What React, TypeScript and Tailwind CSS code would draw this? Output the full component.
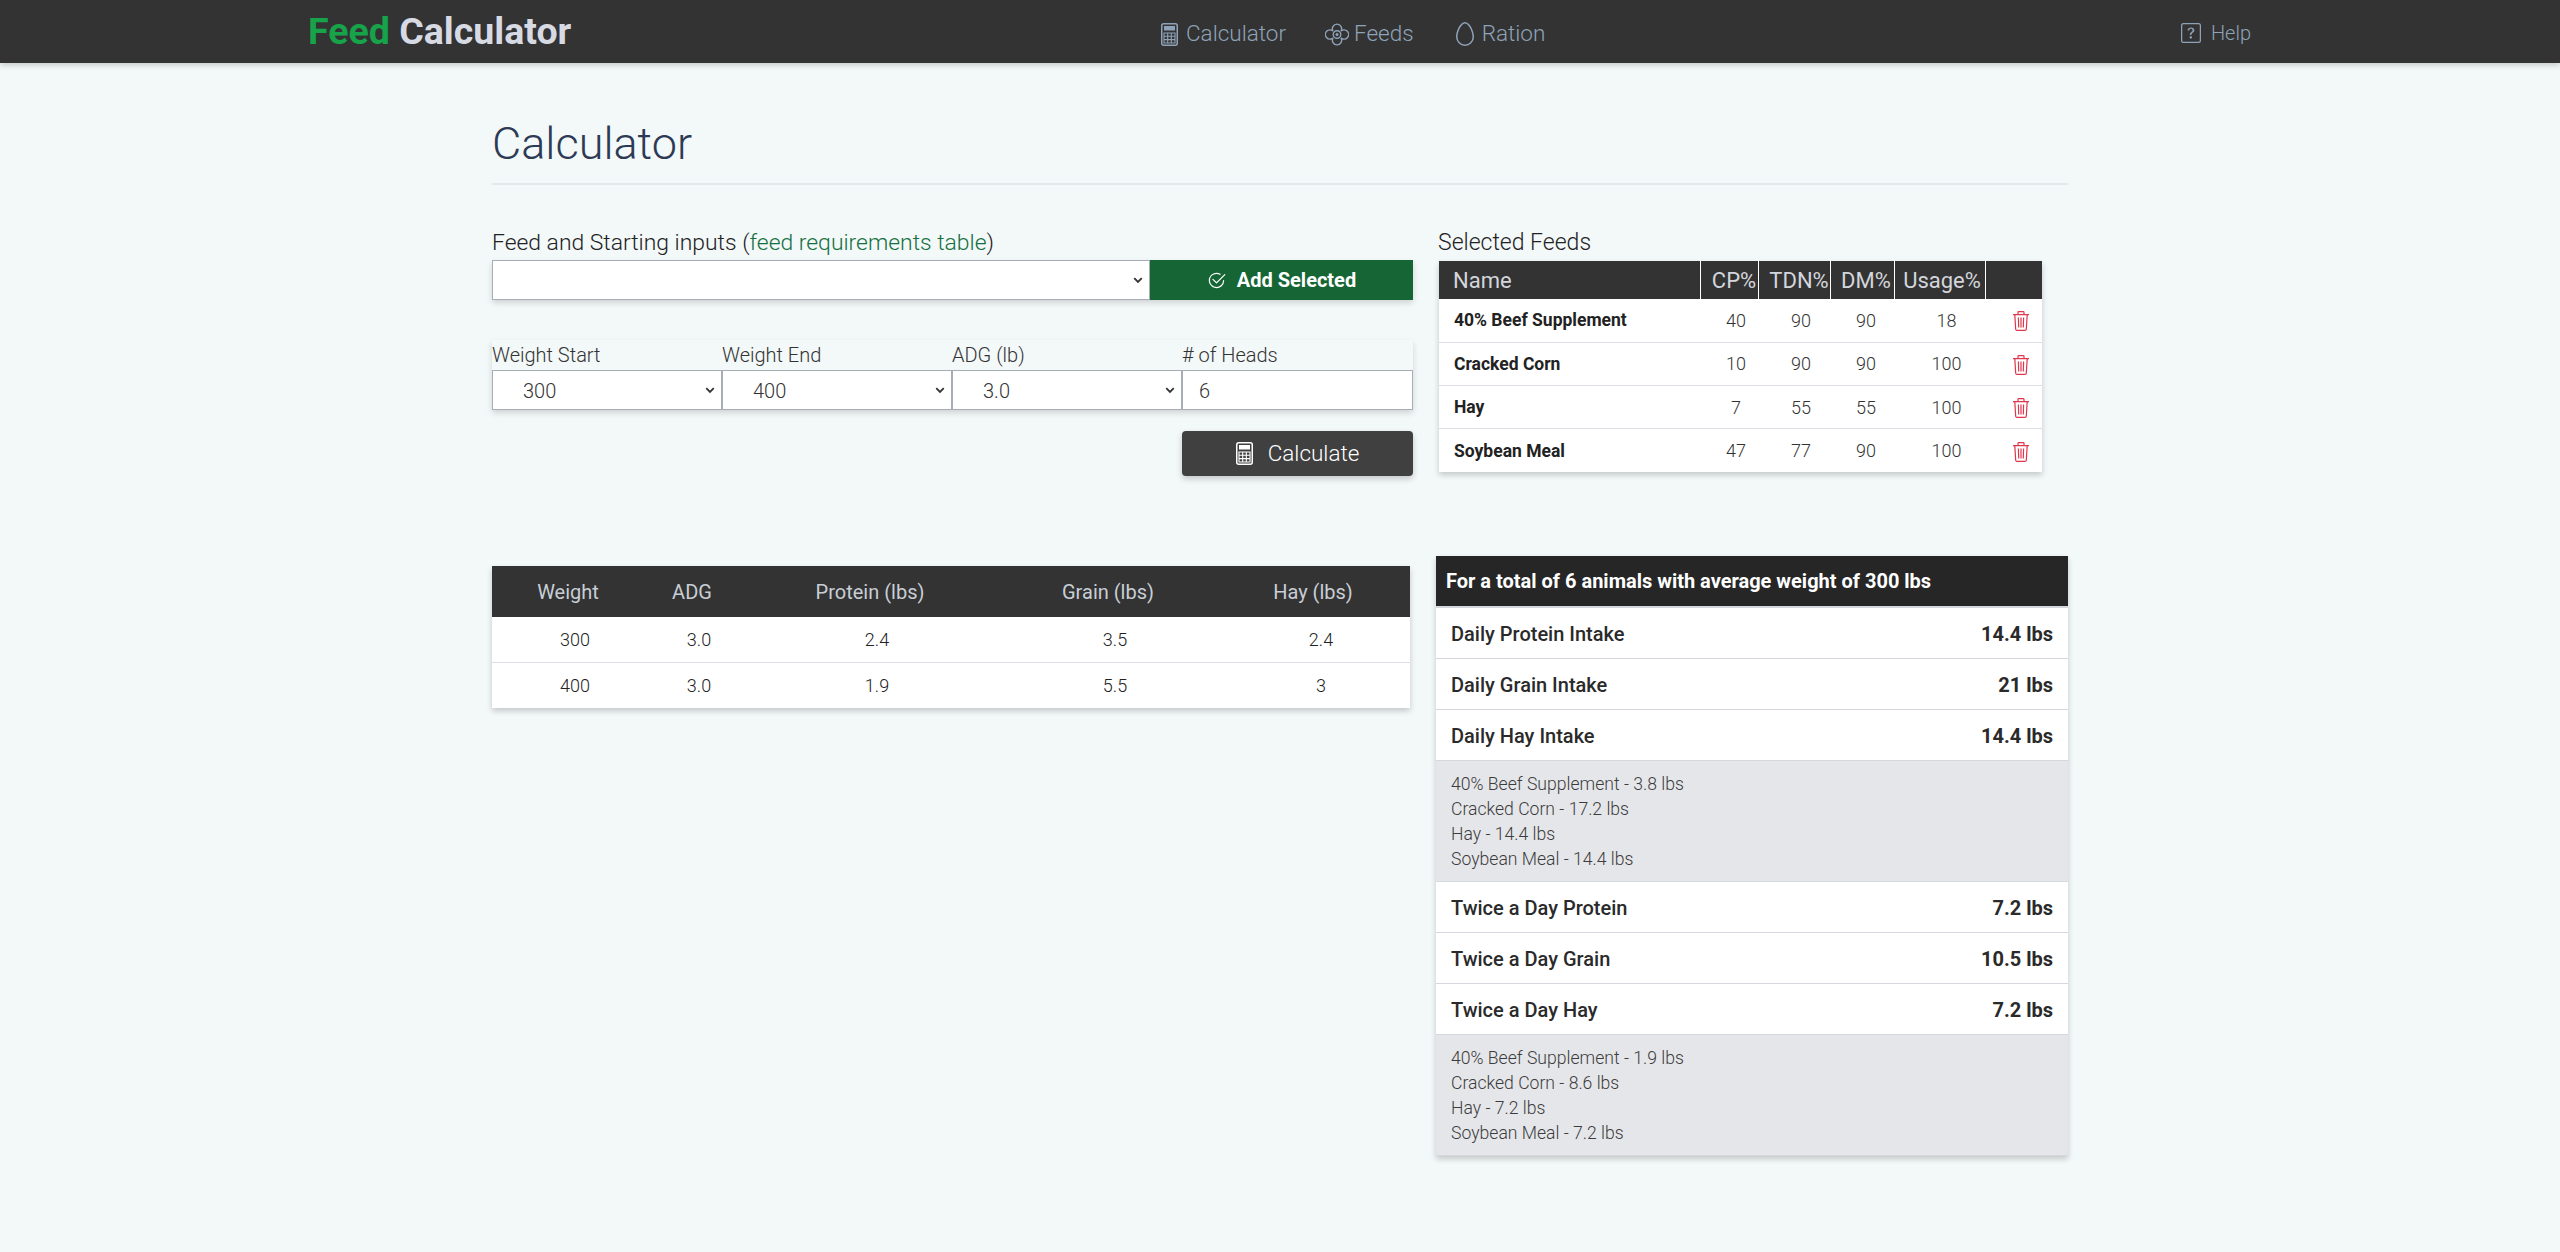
import { BsEgg, BsQuestionSquare, BsCheck2Circle } from "react-icons/bs";

const font = { fontFamily: "Roboto, sans-serif" };

const feeds = [
  { name: "40% Beef Supplement", cp: 40, tdn: 90, dm: 90, usage: 18 },
  { name: "Cracked Corn", cp: 10, tdn: 90, dm: 90, usage: 100 },
  { name: "Hay", cp: 7, tdn: 55, dm: 55, usage: 100 },
  { name: "Soybean Meal", cp: 47, tdn: 77, dm: 90, usage: 100 },
];

const rations = [
  { weight: 300, adg: "3.0", protein: "2.4", grain: "3.5", hay: "2.4" },
  { weight: 400, adg: "3.0", protein: "1.9", grain: "5.5", hay: "3" },
];

function CalcIcon() {
  return (
    <svg viewBox="0 0 17 23" className="h-[23px] w-[17px] shrink-0" fill="none" stroke="currentColor">
      <rect x="0.75" y="0.75" width="15.5" height="21.5" rx="2" strokeWidth="1.5" />
      <rect x="3" y="3" width="11" height="4.5" fill="currentColor" stroke="none" />
      <path d="M3 10h11v10H3zM3 13.3h11M3 16.6h11M6.7 10v10M10.3 10v10" strokeWidth="1.1" />
    </svg>
  );
}

function FlowerIcon() {
  return (
    <svg viewBox="0 0 24 23" className="h-[23px] w-[24px] shrink-0" fill="none" stroke="currentColor" strokeWidth="1.4">
      <path d="M8 8A4.6 4.6 0 1 1 16 8A4.6 4.6 0 1 1 16 15A4.6 4.6 0 1 1 8 15A4.6 4.6 0 1 1 8 8Z" />
      <circle cx="12" cy="11.5" r="3.8" />
      <circle cx="12" cy="11.5" r="1.5" fill="currentColor" stroke="none" />
    </svg>
  );
}

function TrashIcon() {
  return (
    <svg viewBox="0 0 16 20" className="h-[20px] w-[16px]" fill="none" stroke="currentColor" strokeWidth="1.2">
      <path d="M0 3.6h16M5 3.6V1.4Q5 .6 5.8 .6h4.4q.8 0 .8 .8v2.2" />
      <path d="M1.8 3.6l.9 14.6q.1 1.2 1.3 1.2h8q1.2 0 1.3-1.2l.9-14.6" />
      <path d="M5.4 6.5l.3 10M8 6.5v10M10.6 6.5l-.3 10" />
    </svg>
  );
}

function Chevron() {
  return (
    <svg viewBox="0 0 16 16" className="absolute right-[5px] top-1/2 h-[12px] w-[12px] -translate-y-1/2 text-[#333]" fill="none" stroke="currentColor" strokeWidth={2.4}>
      <path d="M3 5.5l5 5 5-5" />
    </svg>
  );
}

function SelectBox({ value, label }: { value: string; label: string }) {
  return (
    <div className="flex w-[230px] flex-col">
      <div className="flex h-[30px] items-center text-[20px] font-light text-[#333]">{label}</div>
      <div className="relative flex h-[40px] items-center border border-[#a8adb5] bg-white pt-[1px] pl-[30px] text-[20px] font-light text-[#333]">
        {value}
        <Chevron />
      </div>
    </div>
  );
}

function Row({ label, value }: { label: string; value: string }) {
  return (
    <div className="flex h-[51px] items-center justify-between border-b border-[#d5d7de] bg-white px-[15px] pt-[1px] text-[20px] font-medium text-[#2a2a2a]">
      <span>{label}</span>
      <span className="font-bold">{value}</span>
    </div>
  );
}

function Breakdown({ lines }: { lines: string[] }) {
  return (
    <div className="border-b border-[#d5d7de] bg-[#e5e6ea] px-[15px] pt-[11px] pb-[9px] text-[17.6px] leading-[25px] font-light text-[#3c3c3c]">
      {lines.map((line) => (
        <div key={line}>{line}</div>
      ))}
    </div>
  );
}

export default function App() {
  return (
    <div className="min-h-[1252px] bg-[#f3f8f9]" style={font}>
      {/* Navbar */}
      <nav className="flex h-[63px] items-center bg-[#333] pl-[308px] pr-[309px] shadow-[0_2px_6px_rgba(0,0,0,0.2)]">
        <div className="w-[853px] pt-[1px] text-[37.5px] leading-none font-bold text-[#d8dae3]">
          <span className="text-[#16a34a]">Feed</span> Calculator
        </div>
        <div className="flex items-center gap-[39px] pt-[5px] text-[22.5px] font-light text-[#8fa3b8]">
          <a className="flex items-center gap-[8px]"><CalcIcon />Calculator</a>
          <a className="flex items-center gap-[5px]"><FlowerIcon />Feeds</a>
          <a className="flex items-center gap-[5px]"><BsEgg className="text-[24px]" />Ration</a>
        </div>
        <a className="ml-auto flex items-center gap-[10px] pt-[2px] text-[20px] font-light text-[#8fa3b8]"><BsQuestionSquare className="text-[20px]" />Help</a>
      </nav>

      <main className="mx-auto w-[1576px]">
        <h1 className="mt-[50px] text-[45px] leading-[62px] font-light text-[#2d3a55]">Calculator</h1>
        <hr className="mt-[8px] border-t-2 border-[#e5e9eb]" />

        <div className="mt-[40px] flex justify-between">
          {/* Inputs */}
          <div className="w-[921px]">
            <div className="flex h-[35px] items-center pt-[2px] text-[22.9px] font-light text-[#222]">
              Feed and Starting inputs (<a className="text-[#15703f]">feed requirements table</a>)
            </div>
            <div className="flex h-[40px] shadow-[0_3px_6px_rgba(0,0,0,0.15)]">
              <div className="relative flex-1 border border-[#a8adb5] bg-white"><Chevron /></div>
              <button className="flex w-[263px] items-center justify-center gap-[11px] bg-[#166534] text-[20px] font-bold text-white">
                <BsCheck2Circle className="text-[19px]" />Add Selected
              </button>
            </div>
            <div className="mt-[40px] flex shadow-[0_3px_6px_rgba(0,0,0,0.15)]">
              <SelectBox label="Weight Start" value="300" />
              <SelectBox label="Weight End" value="400" />
              <SelectBox label="ADG (lb)" value="3.0" />
              <div className="flex w-[231px] flex-col">
                <div className="flex h-[30px] items-center text-[20px] font-light text-[#333]"># of Heads</div>
                <div className="flex h-[40px] items-center border border-[#a8adb5] bg-white pt-[1px] pl-[16px] text-[20px] font-light text-[#333]">6</div>
              </div>
            </div>
            <div className="mt-[21px] flex justify-end">
              <button className="flex h-[45px] w-[231px] items-center justify-center gap-[15px] rounded-[4px] bg-[#404040] text-[22.5px] font-light text-white shadow-[0_3px_6px_rgba(0,0,0,0.2)]">
                <CalcIcon />Calculate
              </button>
            </div>
          </div>

          {/* Selected feeds */}
          <div className="w-[632px]">
            <div className="flex h-[35px] items-center pt-[2px] pl-[2px] text-[23px] font-light text-[#222]">Selected Feeds</div>
            <table className="mt-[1px] ml-[3px] w-[603px] table-fixed border-collapse bg-white shadow-[0_3px_6px_rgba(0,0,0,0.2)]">
              <thead>
                <tr className="h-[38px] bg-[#333] text-[22px] whitespace-nowrap text-[#d3d6dc]">
                  <th className="w-[261px] border-r border-white pl-[14px] text-left font-normal">Name</th>
                  <th className="w-[58px] border-r border-white pl-[10px] font-normal">CP%</th>
                  <th className="w-[72px] border-r border-white pl-[10px] font-normal">TDN%</th>
                  <th className="w-[64px] border-r border-white pl-[8px] font-normal">DM%</th>
                  <th className="w-[91px] border-r border-white pl-[5px] font-normal">Usage%</th>
                  <th></th>
                </tr>
              </thead>
              <tbody>
                {feeds.map((f, i) => (
                  <tr key={f.name} className={i < 3 ? "h-[43.25px] border-b border-[#dddfe4]" : "h-[43.25px]"}>
                    <td className="pl-[15px] text-[17.5px] font-bold text-[#222]">{f.name}</td>
                    <td className="pl-[14px] text-center text-[18px] font-light text-[#333]">{f.cp}</td>
                    <td className="pl-[14px] text-center text-[18px] font-light text-[#333]">{f.tdn}</td>
                    <td className="pl-[8px] text-center text-[18px] font-light text-[#333]">{f.dm}</td>
                    <td className="pl-[14px] text-center text-[18px] font-light text-[#333]">{f.usage}</td>
                    <td className="pt-[2px] pl-[28px] text-[#e0364c]"><TrashIcon /></td>
                  </tr>
                ))}
              </tbody>
            </table>
          </div>
        </div>

        <div className="mt-[80px] flex items-start justify-between">
          {/* Ration table */}
          <table className="mt-[10px] w-[918px] table-fixed border-collapse bg-white shadow-[0_3px_6px_rgba(0,0,0,0.2)]">
            <thead>
              <tr className="h-[51px] bg-[#333] text-[20px] text-[#c8ced6]">
                <th className="w-[166px] pr-[14px] font-normal">Weight</th>
                <th className="w-[82px] pr-[14px] font-normal">ADG</th>
                <th className="w-[274px] pr-[14px] font-normal">Protein (lbs)</th>
                <th className="w-[202px] pr-[14px] font-normal">Grain (lbs)</th>
                <th className="font-normal">Hay (lbs)</th>
              </tr>
            </thead>
            <tbody>
              {rations.map((r, i) => (
                <tr key={r.weight} className={i === 0 ? "h-[45px] border-b border-[#dddfe4]" : "h-[46px]"}>
                  <td className="text-center text-[18px] font-light text-[#222]">{r.weight}</td>
                  <td className="text-center text-[18px] font-light text-[#222]">{r.adg}</td>
                  <td className="text-center text-[18px] font-light text-[#222]">{r.protein}</td>
                  <td className="text-center text-[18px] font-light text-[#222]">{r.grain}</td>
                  <td className="pl-[16px] text-center text-[18px] font-light text-[#222]">{r.hay}</td>
                </tr>
              ))}
            </tbody>
          </table>

          {/* Summary */}
          <div className="w-[632px] shadow-[0_3px_6px_rgba(0,0,0,0.2)]">
            <div className="flex h-[50px] items-center bg-[#262626] pl-[10px] text-[20px] font-bold text-white">
              For a total of 6 animals with average weight of 300 lbs
            </div>
            <div className="h-[2px] bg-[#d5d7de]" />
            <Row label="Daily Protein Intake" value="14.4 lbs" />
            <Row label="Daily Grain Intake" value="21 lbs" />
            <Row label="Daily Hay Intake" value="14.4 lbs" />
            <Breakdown lines={["40% Beef Supplement - 3.8 lbs", "Cracked Corn - 17.2 lbs", "Hay - 14.4 lbs", "Soybean Meal - 14.4 lbs"]} />
            <Row label="Twice a Day Protein" value="7.2 lbs" />
            <Row label="Twice a Day Grain" value="10.5 lbs" />
            <Row label="Twice a Day Hay" value="7.2 lbs" />
            <Breakdown lines={["40% Beef Supplement - 1.9 lbs", "Cracked Corn - 8.6 lbs", "Hay - 7.2 lbs", "Soybean Meal - 7.2 lbs"]} />
          </div>
        </div>
      </main>
    </div>
  );
}
